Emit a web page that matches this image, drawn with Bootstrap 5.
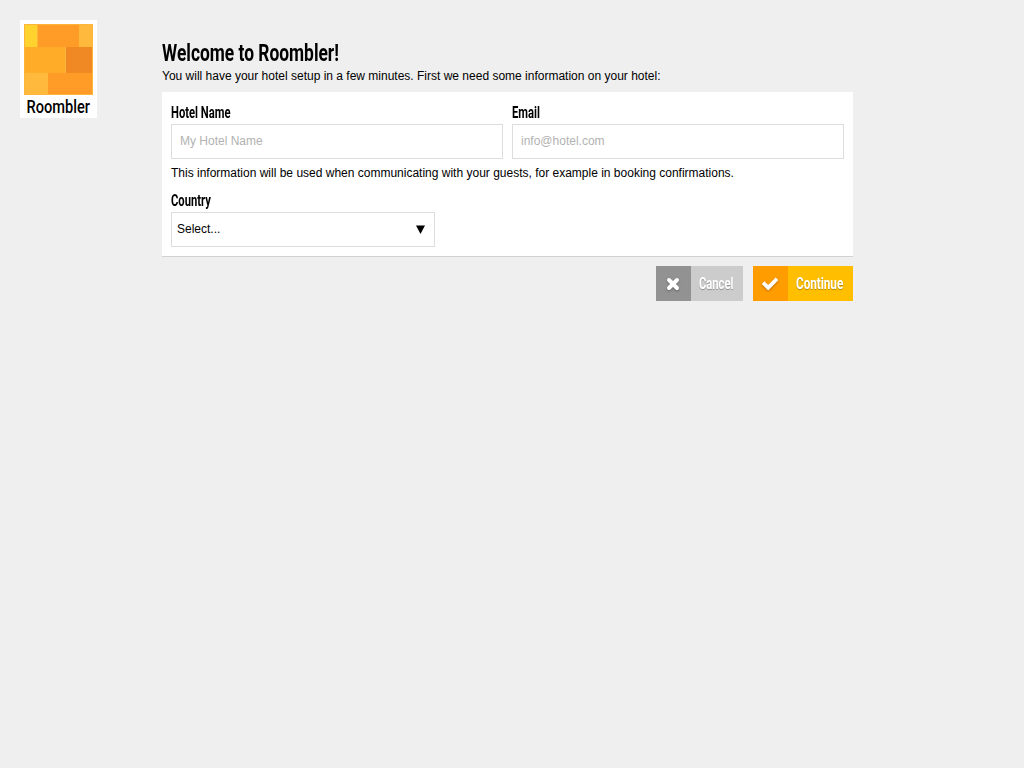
<!DOCTYPE html>
<html lang="en">
<head>
    <meta charset="UTF-8">
    <meta name="viewport" content="width=device-width, initial-scale=1.0">
    <title>Roombler</title>
    <link href="https://cdn.jsdelivr.net/npm/bootstrap@5.3.0/dist/css/bootstrap.min.css" rel="stylesheet">
    <style>
    body {
      background: #efefef;
      color: #000;
      font: 12px/18px "Liberation Sans", Arial, sans-serif;
      letter-spacing: 0;
    }
    .logo { width: 77px; height: 98px; margin: 20px 65px 0 20px; overflow: visible; }
    .setup { width: 691px; margin-top: 41px; }
    /* narrow lettering for headings, labels and buttons */
    .narrow {
      display: inline-block;
      font-family: Roboto, sans-serif;
      font-weight: 700;
      white-space: nowrap;
      transform: scaleX(.7);
      transform-origin: 0 50%;
    }
    h1.narrow { font-size: 24px; line-height: 25px; margin-bottom: 1px; display: block; transform: scaleX(.724); }
    .intro { margin-bottom: 7px; }
    .panel { padding: 9px; border-bottom: 1px solid #d2d2d2; }
    .fields { gap: 9px; }
    .form-label { display: block; height: 23px; font-size: 16px; line-height: 23px; }
    .panel .form-control, .panel .form-select {
      height: 35px;
      border-color: #ddd;
      font-size: 12px;
      color: #000;
    }
    .panel .form-control { padding: 0 8px 2px; }
    .panel .form-control::placeholder { color: #b2b2b2; }
    .panel .form-select {
      width: 264px;
      padding: 0 30px 2px 5px;
      background-image: none;
    }
    .arrow { right: 10px; top: 13px; }
    .help { margin: 5px 0 7px; }
    .actions { gap: 10px; margin-top: 9px; }
    .actions .btn { height: 35px; color: #fff; background: #ccc; }
    .actions .btn-go { background: #ffbf00; }
    .btn-icon { width: 35px; height: 35px; padding-right: 1px; background: #929292; }
    .btn-go .btn-icon { background: #ff9c00; }
    .btn-icon svg { filter: drop-shadow(0 1px 1px rgba(0, 0, 0, .3)); }
    .btn-text {
      width: 52px;
      padding-left: 8px;
      font-size: 16px;
      line-height: 35px;
      text-align: left;
      text-shadow: 0 1px 1px rgba(0, 0, 0, .3);
    }
    .btn-go .btn-text { width: 65px; }
    .btn-go .narrow { transform: scaleX(.73); }
    </style>
</head>
<body>
    <div class="d-flex align-items-start">
        <svg class="logo flex-shrink-0" viewBox="0 0 77 98">
            <rect width="77" height="98" fill="#fff"/>
            <rect x="4" y="4" width="69" height="71" fill="#ffb43c"/>
            <rect x="5" y="5" width="12" height="22" fill="#ffd22d"/>
            <rect x="18" y="5" width="41" height="22" fill="#ff9c28"/>
            <rect x="59" y="5" width="13" height="22" fill="#ffb93c"/>
            <rect x="5" y="27" width="40" height="26" fill="#ffad29"/>
            <rect x="46" y="27" width="26" height="26" fill="#f08823"/>
            <rect x="5" y="53" width="23" height="21" fill="#ffb93c"/>
            <rect x="28" y="53" width="44" height="21" fill="#ff9c28"/>
            <text x="6.5" y="93" font-family="Roboto, sans-serif" font-size="19" font-weight="500" textLength="63.5" lengthAdjust="spacingAndGlyphs">Roombler</text>
        </svg>

        <main class="setup">
            <h1 class="narrow">Welcome to Roombler!</h1>
            <p class="intro">You will have your hotel setup in a few minutes. First we need some information on your hotel:</p>

            <form id="setupForm">
                <div class="panel bg-white">
                    <div class="fields d-flex">
                        <div class="flex-fill">
                            <label class="form-label mb-0" for="hotelName"><span class="narrow">Hotel Name</span></label>
                            <input type="text" id="hotelName" class="form-control rounded-0" placeholder="My Hotel Name">
                        </div>
                        <div class="flex-fill">
                            <label class="form-label mb-0" for="email"><span class="narrow">Email</span></label>
                            <input type="email" id="email" class="form-control rounded-0" placeholder="info@hotel.com">
                        </div>
                    </div>
                    <p class="help">This information will be used when communicating with your guests, for example in booking confirmations.</p>
                    <label class="form-label mb-0" for="country"><span class="narrow">Country</span></label>
                    <div class="position-relative d-inline-block align-top">
                        <select id="country" class="form-select rounded-0">
                            <option>Select...</option>
                        </select>
                        <svg class="arrow position-absolute pe-none" width="9" height="9"><path d="M0 .5h9L4.500 9z"/></svg>
                    </div>
                </div>

                <div class="actions d-flex justify-content-end">
                    <button type="button" class="btn d-flex p-0 border-0 rounded-0">
                        <span class="btn-icon d-flex align-items-center justify-content-center">
                            <svg width="14" height="14" viewBox="0 0 14 14"><path d="M3 3l8 8M11 3l-8 8" stroke="#fff" stroke-width="4" stroke-linecap="round"/></svg>
                        </span>
                        <span class="btn-text"><span class="narrow">Cancel</span></span>
                    </button>
                    <button type="submit" class="btn btn-go d-flex p-0 border-0 rounded-0">
                        <span class="btn-icon d-flex align-items-center justify-content-center">
                            <svg width="16" height="14" viewBox="0 0 16 14"><path d="M2.500 7l3.700 3.700L13.700 3.200" fill="none" stroke="#fff" stroke-width="3.800" stroke-linecap="square"/></svg>
                        </span>
                        <span class="btn-text"><span class="narrow">Continue</span></span>
                    </button>
                </div>
            </form>
        </main>
    </div>

    <script src="https://cdn.jsdelivr.net/npm/bootstrap@5.3.0/dist/js/bootstrap.bundle.min.js"></script>
</body>
</html>
